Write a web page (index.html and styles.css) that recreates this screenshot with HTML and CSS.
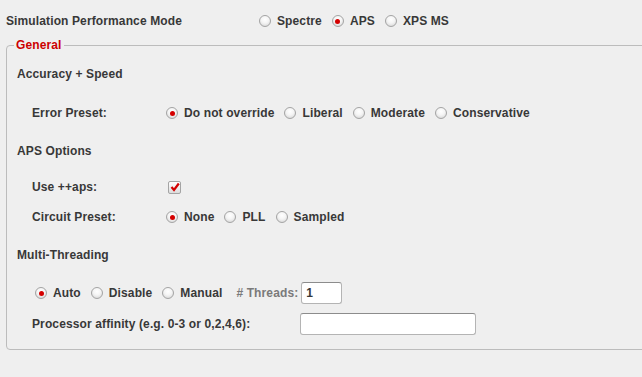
FILE: index.html
```html
<!DOCTYPE html>
<html lang="en">
<head>
  <meta charset="UTF-8">
  <title>Simulation Performance Mode</title>
  <link rel="stylesheet" href="styles.css">
</head>
<body>

<div class="page">
  <div class="mode-row">
    <span class="mode-label">Simulation Performance Mode</span>
    <span class="radio"></span><span class="opt">Spectre</span>
    <span class="radio checked"></span><span class="opt">APS</span>
    <span class="radio"></span><span class="opt">XPS MS</span>
  </div>

  <div class="frame">
    <span class="legend">General</span>

    <!-- Accuracy + Speed -->
    <div class="title first">Accuracy + Speed</div>
    <div class="row r-error">
      <span class="label">Error Preset:</span>
      <span class="radio checked"></span><span class="opt">Do not override</span>
      <span class="radio"></span><span class="opt">Liberal</span>
      <span class="radio"></span><span class="opt">Moderate</span>
      <span class="radio"></span><span class="opt">Conservative</span>
    </div>

    <!-- APS Options -->
    <div class="title">APS Options</div>
    <div class="row r-aps">
      <span class="label">Use ++aps:</span>
      <span class="check">
        <svg width="10" height="10" viewBox="0 0 10 10"><path d="M1.5 5 L4 8 L8.8 1.5" fill="none" stroke="#d40000" stroke-width="2.2"/></svg>
      </span>
    </div>
    <div class="row r-circuit">
      <span class="label">Circuit Preset:</span>
      <span class="radio checked"></span><span class="opt">None</span>
      <span class="radio"></span><span class="opt">PLL</span>
      <span class="radio"></span><span class="opt">Sampled</span>
    </div>

    <!-- Multi-Threading -->
    <div class="title">Multi-Threading</div>
    <div class="row r-threads">
      <span class="radio checked"></span><span class="opt">Auto</span>
      <span class="radio"></span><span class="opt">Disable</span>
      <span class="radio"></span><span class="opt">Manual</span>
      <span class="muted"># Threads:</span>
      <input class="field small" type="text" value="1">
    </div>
    <div class="row r-affinity">
      <span class="label wide">Processor affinity (e.g. 0-3 or 0,2,4,6):</span>
      <input class="field big" type="text">
    </div>
  </div>
</div>

</body>
</html>
```

FILE: styles.css
```css
body {
  margin: 0;
  padding: 0;
  background: #efefef;
  font-family: "Liberation Sans", Arial, sans-serif;
  font-size: 12px;
  font-weight: bold;
  letter-spacing: 0.12px;
  color: #383838;
  overflow: hidden;
}

.page {
  width: 642px;
  height: 377px;
}

.mode-row {
  height: 42px;
  display: flex;
  align-items: center;
  padding-left: 6px;
}

.mode-label {
  width: 253px;
}

.radio {
  position: relative;
  width: 10px;
  height: 10px;
  border-radius: 50%;
  border: 1px solid #a4a4a4;
  background: radial-gradient(circle at 50% 35%, #ffffff 0%, #f4f4f4 45%, #cfcfcf 100%);
  margin-right: 6px;
  flex: none;
}

.radio.checked::after {
  content: "";
  position: absolute;
  left: 2.5px;
  top: 2.5px;
  width: 5px;
  height: 5px;
  border-radius: 50%;
  background: #d40000;
}

.opt {
  margin-right: 10px;
}

.frame {
  position: relative;
  margin-top: 3px;
  margin-left: 6px;
  width: 660px;
  border: 1px solid #bcbcbc;
  border-radius: 4px;
  padding-bottom: 13px;
}

.legend {
  position: absolute;
  left: 7px;
  top: -8px;
  padding: 0 2px;
  background: #efefef;
  color: #cc0000;
}

.title {
  height: 24px;
  line-height: 24px;
  padding-left: 10px;
  margin-top: 14px;
}

.title.first {
  margin-top: 16px;
}

.row {
  height: 24px;
  display: flex;
  align-items: center;
  padding-left: 25px;
}

.r-error { margin-top: 15px; }
.r-aps { margin-top: 12px; }
.r-circuit { margin-top: 6px; }
.r-threads { margin-top: 14px; padding-left: 28px; }
.r-affinity { margin-top: 7px; }

.label {
  width: 134px;
  flex: none;
}

.label.wide {
  width: 268px;
}

.check {
  width: 11px;
  height: 11px;
  border: 1px solid #a4a4a4;
  border-radius: 2px;
  background: linear-gradient(#ffffff, #dcdcdc);
  display: flex;
  align-items: center;
  justify-content: center;
  margin-left: 2px;
}

.muted {
  color: #7a7a7a;
  margin-left: 4px;
  margin-right: 3px;
}

.field {
  height: 22px;
  box-sizing: border-box;
  border: 1px solid #b4b4b4;
  border-top-color: #8c8c8c;
  border-radius: 3px;
  background: #fff;
  font-family: "Liberation Sans", Arial, sans-serif;
  font-size: 12px;
  font-weight: bold;
  color: #383838;
  padding: 0 4px;
  outline: none;
}

.field.small {
  width: 41px;
}

.field.big {
  width: 176px;
}
```
